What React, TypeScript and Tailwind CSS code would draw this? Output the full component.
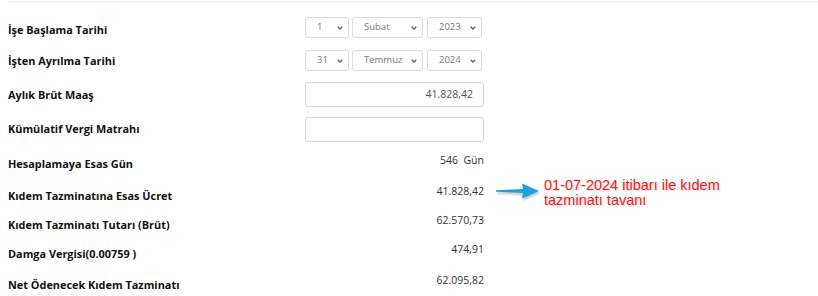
import React from "react";

const font = { fontFamily: '"Open Sans", "Noto Sans", sans-serif' };

function Chevron() {
  return (
    <svg width="6" height="4" viewBox="0 0 6 4" className="shrink-0">
      <path d="M0.7 0.8 L3 3.1 L5.3 0.8" fill="none" stroke="#666" strokeWidth="1.4" />
    </svg>
  );
}

function Select({ value, w }: { value: string; w: string }) {
  return (
    <div
      className={`${w} h-full flex items-center justify-between pl-[11px] pr-[5px] border border-[#dcdcdc] rounded-[3px] bg-white text-[9.5px] text-[#777]`}
    >
      <span>{value}</span>
      <Chevron />
    </div>
  );
}

function Arrow() {
  return (
    <svg width="46" height="18" viewBox="0 0 46 18" className="drop-shadow-[1px_2px_1px_rgba(0,0,0,0.25)]">
      <path d="M1 8.2 L28 7 L27 1.5 L44 9 L27 16.5 L28 11 L1 9.8 Z" fill="#1ba1e2" />
    </svg>
  );
}

const label = "w-[297px] text-[10.9px] font-bold leading-[16px] text-[#111]";

const rows = [
  { label: "Hesaplamaya Esas Gün", value: "546  Gün", h: "h-[32px]", lp: "pt-[6px]", vp: "pt-[2px]" },
  { label: "Kıdem Tazminatına Esas Ücret", value: "41.828,42", h: "h-[30px]", lp: "pt-[6px]", vp: "pt-[1px]", note: true },
  { label: "Kıdem Tazminatı Tutarı (Brüt)", value: "62.570,73", h: "h-[29px]", lp: "pt-[5px]", vp: "pt-[0px]" },
  { label: "Damga Vergisi(0.00759 )", value: "474,91", h: "h-[30px]", lp: "pt-[5px]", vp: "pt-[0px]" },
  { label: "Net Ödenecek Kıdem Tazminatı", value: "62.095,82", h: "h-[25px]", lp: "pt-[6px]", vp: "pt-[1px]" },
];

export default function App() {
  return (
    <div className="w-[818px] h-[296px] bg-white overflow-hidden text-[#222]" style={font}>
      <div className="ml-[8px] mt-[1px] h-[2px] bg-[#f4f4f4]" />
      <div className="pl-[8px] pt-[14px]">
        {/* dates */}
        <div className="flex h-[33px]">
          <div className={`${label} pt-[5px]`}>İşe Başlama Tarihi</div>
          <div className="flex h-[21px]">
            <Select value="1" w="w-[44px]" />
            <div className="ml-[3px]"><Select value="Subat" w="w-[71px]" /></div>
            <div className="ml-[4px]"><Select value="2023" w="w-[55px]" /></div>
          </div>
        </div>
        <div className="flex h-[32px]">
          <div className={`${label} pt-[3px]`}>İşten Ayrılma Tarihi</div>
          <div className="flex h-[21px]">
            <Select value="31" w="w-[44px]" />
            <div className="ml-[3px]"><Select value="Temmuz" w="w-[71px]" /></div>
            <div className="ml-[4px]"><Select value="2024" w="w-[55px]" /></div>
          </div>
        </div>
        {/* inputs */}
        <div className="flex h-[35px]">
          <div className={`${label} pt-[5px]`}>Aylık Brüt Maaş</div>
          <div className="w-[179px] h-[25px] border border-[#d8d8d8] rounded-[3px] flex items-center justify-end pr-[10px] text-[10.5px] text-[#555]">
            41.828,42
          </div>
        </div>
        <div className="flex h-[33px]">
          <div className={`${label} pt-[4px]`}>Kümülatif Vergi Matrahı</div>
          <div className="w-[179px] h-[25px] border border-[#d8d8d8] rounded-[3px]" />
        </div>
        {/* results */}
        {rows.map((r) => (
          <div key={r.label} className={`flex ${r.h}`}>
            <div className={`${label} ${r.lp}`}>{r.label}</div>
            <div className={`w-[179px] ${r.vp} text-right text-[10.5px] leading-[16px] text-[#333] whitespace-pre`}>
              {r.value}
            </div>
            {r.note && (
              <div className="flex items-start">
                <div className="ml-[11px]">
                  <Arrow />
                </div>
                <div
                  className="ml-[3px] -mt-[4px] text-[14.5px] leading-[15px] text-[#f21b1b] [text-shadow:1px_1px_2px_rgba(0,0,0,0.2)]"
                  style={{ fontFamily: '"Liberation Sans", Arial, sans-serif' }}
                >
                  01-07-2024 itibarı ile kıdem
                  <br />
                  tazminatı tavanı
                </div>
              </div>
            )}
          </div>
        ))}
      </div>
    </div>
  );
}
